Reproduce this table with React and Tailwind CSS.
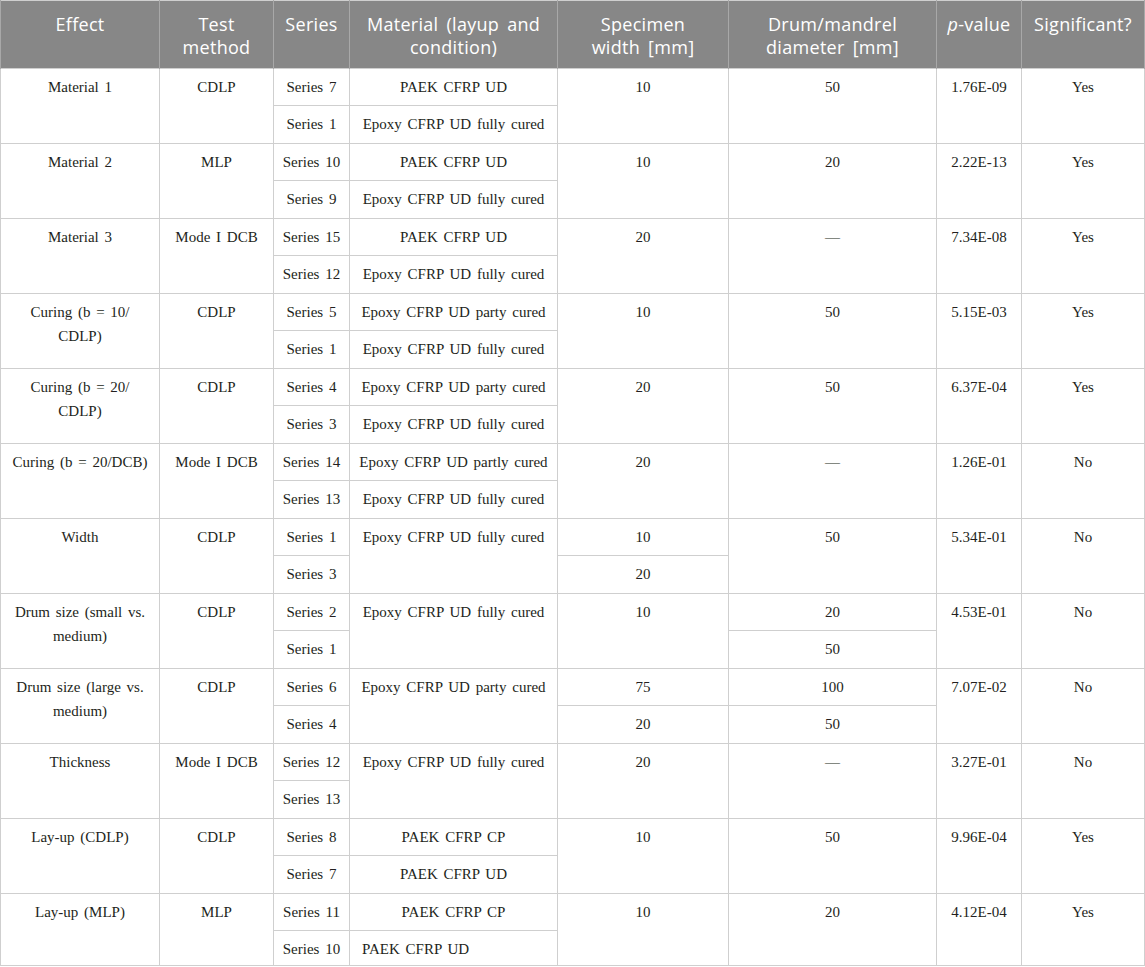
import React from "react";

const headers = [
  { label: ["Effect"], w: "w-[159px]" },
  { label: ["Test", "method"], w: "w-[114px]" },
  { label: ["Series"], w: "w-[76px]" },
  { label: ["Material (layup and", "condition)"], w: "w-[208px]" },
  { label: ["Specimen", "width [mm]"], w: "w-[171px]" },
  { label: ["Drum/mandrel", "diameter [mm]"], w: "w-[208px]" },
  { label: null, w: "w-[85px]" },
  { label: ["Significant?"], w: "w-[123px]" },
];

const FULL = "Epoxy CFRP UD fully cured";

// each group: two sub-rows; cells that are not arrays cover both
const groups = [
  { effect: "Material 1", method: "CDLP", series: ["Series 7", "Series 1"], material: ["PAEK CFRP UD", FULL], width: "10", drum: "50", p: "1.76E-09", sig: "Yes" },
  { effect: "Material 2", method: "MLP", series: ["Series 10", "Series 9"], material: ["PAEK CFRP UD", FULL], width: "10", drum: "20", p: "2.22E-13", sig: "Yes" },
  { effect: "Material 3", method: "Mode I DCB", series: ["Series 15", "Series 12"], material: ["PAEK CFRP UD", FULL], width: "20", drum: "—", p: "7.34E-08", sig: "Yes" },
  { effect: ["Curing (b = 10/", "CDLP)"], method: "CDLP", series: ["Series 5", "Series 1"], material: ["Epoxy CFRP UD party cured", FULL], width: "10", drum: "50", p: "5.15E-03", sig: "Yes" },
  { effect: ["Curing (b = 20/", "CDLP)"], method: "CDLP", series: ["Series 4", "Series 3"], material: ["Epoxy CFRP UD party cured", FULL], width: "20", drum: "50", p: "6.37E-04", sig: "Yes" },
  { effect: "Curing (b = 20/DCB)", method: "Mode I DCB", series: ["Series 14", "Series 13"], material: ["Epoxy CFRP UD partly cured", FULL], width: "20", drum: "—", p: "1.26E-01", sig: "No" },
  { effect: "Width", method: "CDLP", series: ["Series 1", "Series 3"], material: FULL, width: ["10", "20"], drum: "50", p: "5.34E-01", sig: "No" },
  { effect: ["Drum size (small vs.", "medium)"], method: "CDLP", series: ["Series 2", "Series 1"], material: FULL, width: "10", drum: ["20", "50"], p: "4.53E-01", sig: "No" },
  { effect: ["Drum size (large vs.", "medium)"], method: "CDLP", series: ["Series 6", "Series 4"], material: "Epoxy CFRP UD party cured", width: ["75", "20"], drum: ["100", "50"], p: "7.07E-02", sig: "No" },
  { effect: "Thickness", method: "Mode I DCB", series: ["Series 12", "Series 13"], material: FULL, width: "20", drum: "—", p: "3.27E-01", sig: "No" },
  { effect: "Lay-up (CDLP)", method: "CDLP", series: ["Series 8", "Series 7"], material: ["PAEK CFRP CP", "PAEK CFRP UD"], width: "10", drum: "50", p: "9.96E-04", sig: "Yes" },
  { effect: "Lay-up (MLP)", method: "MLP", series: ["Series 11", "Series 10"], material: ["PAEK CFRP CP", "PAEK CFRP UD"], width: "10", drum: "20", p: "4.12E-04", sig: "Yes", last: true },
];

const cell = "border border-[#cfcfcf] align-top px-1 pt-[6px] text-center";

function Text({ v }) {
  if (Array.isArray(v)) {
    return (
      <>
        {v[0]}
        <br />
        {v[1]}
      </>
    );
  }
  return v;
}

function Group({ g }) {
  const keys = ["effect", "method", "series", "material", "width", "drum", "p", "sig"];
  const split = (k) => k === "series" || ((k === "material" || k === "width" || k === "drum") && Array.isArray(g[k]));
  return (
    <>
      <tr className="h-[37px]">
        {keys.map((k) =>
          split(k) ? (
            <td key={k} className={cell}>{g[k][0]}</td>
          ) : (
            <td key={k} rowSpan={2} className={cell}>
              <Text v={g[k]} />
            </td>
          )
        )}
      </tr>
      <tr className={g.last ? "h-[35px]" : "h-[38px]"}>
        {keys.filter(split).map((k) => (
          <td key={k} className={`${cell} ${g.last && k === "material" ? "!text-left !px-3" : ""}`}>
            {g[k][1]}
          </td>
        ))}
      </tr>
    </>
  );
}

export default function App() {
  return (
    <div className="w-[1145px] bg-white">
      <table className="w-[1145px] border-collapse table-fixed border border-[#cfcfcf] font-['Liberation_Serif',serif] text-[15px] leading-[24px] [word-spacing:2px] text-[#231f20]">
        <thead>
          <tr className="h-[68px] bg-[#878787]">
            {headers.map((h, i) => (
              <th
                key={i}
                className={`${h.w} border-x border-[#a8a8a8] align-top px-1 pt-[12px] font-['Open_Sans',sans-serif] text-[18px] leading-[23px] tracking-[0.3px] [word-spacing:3px] font-normal text-white`}
              >
                {h.label ? (
                  <Text v={h.label.length > 1 ? h.label : h.label[0]} />
                ) : (
                  <>
                    <i>p</i>-value
                  </>
                )}
              </th>
            ))}
          </tr>
        </thead>
        <tbody>
          {groups.map((g, i) => (
            <Group key={i} g={g} />
          ))}
        </tbody>
      </table>
    </div>
  );
}
